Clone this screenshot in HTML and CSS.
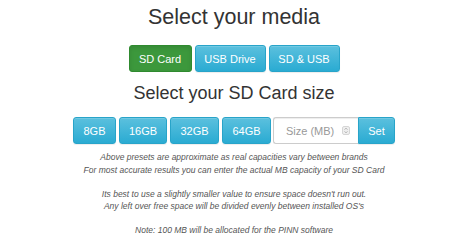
FILE: index.html
```html
<!DOCTYPE html>
<html>
<head>
<meta charset="utf-8">
<link rel="stylesheet" href="styles.css">
</head>
<body>
<div class="page">
  <h1 class="title">Select your media</h1>
  <div class="btn-row media">
    <button class="btn btn-success">SD Card</button>
    <button class="btn btn-info">USB Drive</button>
    <button class="btn btn-info">SD &amp; USB</button>
  </div>
  <h2 class="subtitle">Select your SD Card size</h2>
  <div class="btn-row sizes">
    <button class="btn btn-info gb8">8GB</button>
    <button class="btn btn-info gb16">16GB</button>
    <button class="btn btn-info gb32">32GB</button>
    <button class="btn btn-info gb64">64GB</button>
    <div class="input-group">
      <div class="size-input">
        <span class="placeholder">Size (MB)</span>
        <span class="spinner"><svg width="8" height="9" viewBox="0 0 8 9"><rect x="0.5" y="0.5" width="7" height="8" rx="1.5" fill="#efefef" stroke="#d6d6d6"/><path d="M2.6 3.6 L4 2.2 L5.4 3.6 M2.6 5.4 L4 6.8 L5.4 5.4" fill="none" stroke="#9a9a9a" stroke-width="0.8"/></svg></span>
      </div>
      <button class="btn btn-info set">Set</button>
    </div>
  </div>
  <div class="notes">
    <p>Above presets are approximate as real capacities vary between brands<br>For most accurate results you can enter the actual MB capacity of your SD Card</p>
    <p>Its best to use a slightly smaller value to ensure space doesn't run out.<br>Any left over free space will be divided evenly between installed OS's</p>
    <p>Note: 100 MB will be allocated for the PINN software</p>
  </div>
</div>
</body>
</html>
```
FILE: styles.css
```css
html, body {
  margin: 0;
  padding: 0;
  background: #fff;
}
.page {
  width: 468px;
  padding-right: 6px;
  display: flex;
  flex-direction: column;
  align-items: center;
  font-family: "Liberation Sans", Arial, sans-serif;
  color: #333;
}
.title {
  margin: 4px 0 0 0;
  font-size: 21.5px;
  font-weight: normal;
  line-height: 26px;
}
.subtitle {
  margin: 10px 0 0 0;
  font-size: 18px;
  font-weight: normal;
  line-height: 22px;
}
.btn-row {
  display: flex;
  gap: 3px;
}
.media {
  margin-top: 15px;
}
.sizes {
  margin-top: 13px;
}
.btn {
  font-family: "Liberation Sans", Arial, sans-serif;
  font-size: 11px;
  height: 27px;
  padding: 0;
  border-radius: 3px;
  color: #fff;
  cursor: pointer;
  box-shadow: inset 0 1px 0 rgba(255,255,255,.15), 0 1px 1px rgba(0,0,0,.075);
}
.btn-info {
  background: linear-gradient(to bottom, #5bc0de 0%, #2aabd2 100%);
  border: 1px solid #28a4c9;
}
.btn-success {
  background: #3c983c;
  border: 1px solid #2f8a2f;
  box-shadow: inset 0 2px 4px rgba(0,0,0,.1);
}
.media .btn:nth-child(1) { width: 63px; }
.media .btn:nth-child(2) { width: 71px; }
.media .btn:nth-child(3) { width: 71px; }
.gb8 { width: 43px; }
.gb16 { width: 48px; }
.gb32 { width: 49px; }
.gb64 { width: 49px; }
.input-group {
  display: flex;
  margin-left: -1px;
}
.size-input {
  width: 85px;
  height: 27px;
  box-sizing: border-box;
  border: 1px solid #ccc;
  border-right: none;
  border-radius: 3px 0 0 3px;
  display: flex;
  align-items: center;
  padding-left: 12px;
  box-shadow: inset 0 1px 1px rgba(0,0,0,.075);
}
.placeholder {
  font-size: 11px;
  color: #999;
}
.spinner {
  display: flex;
  margin-left: 8px;
}
.set {
  width: 37px;
  border-radius: 0 3px 3px 0;
}
.notes {
  margin-top: 7px;
  font-style: italic;
  font-size: 8.5px;
  line-height: 12.5px;
  color: #555;
  text-align: center;
}
.notes p {
  margin: 0 0 11.5px 0;
}
```
